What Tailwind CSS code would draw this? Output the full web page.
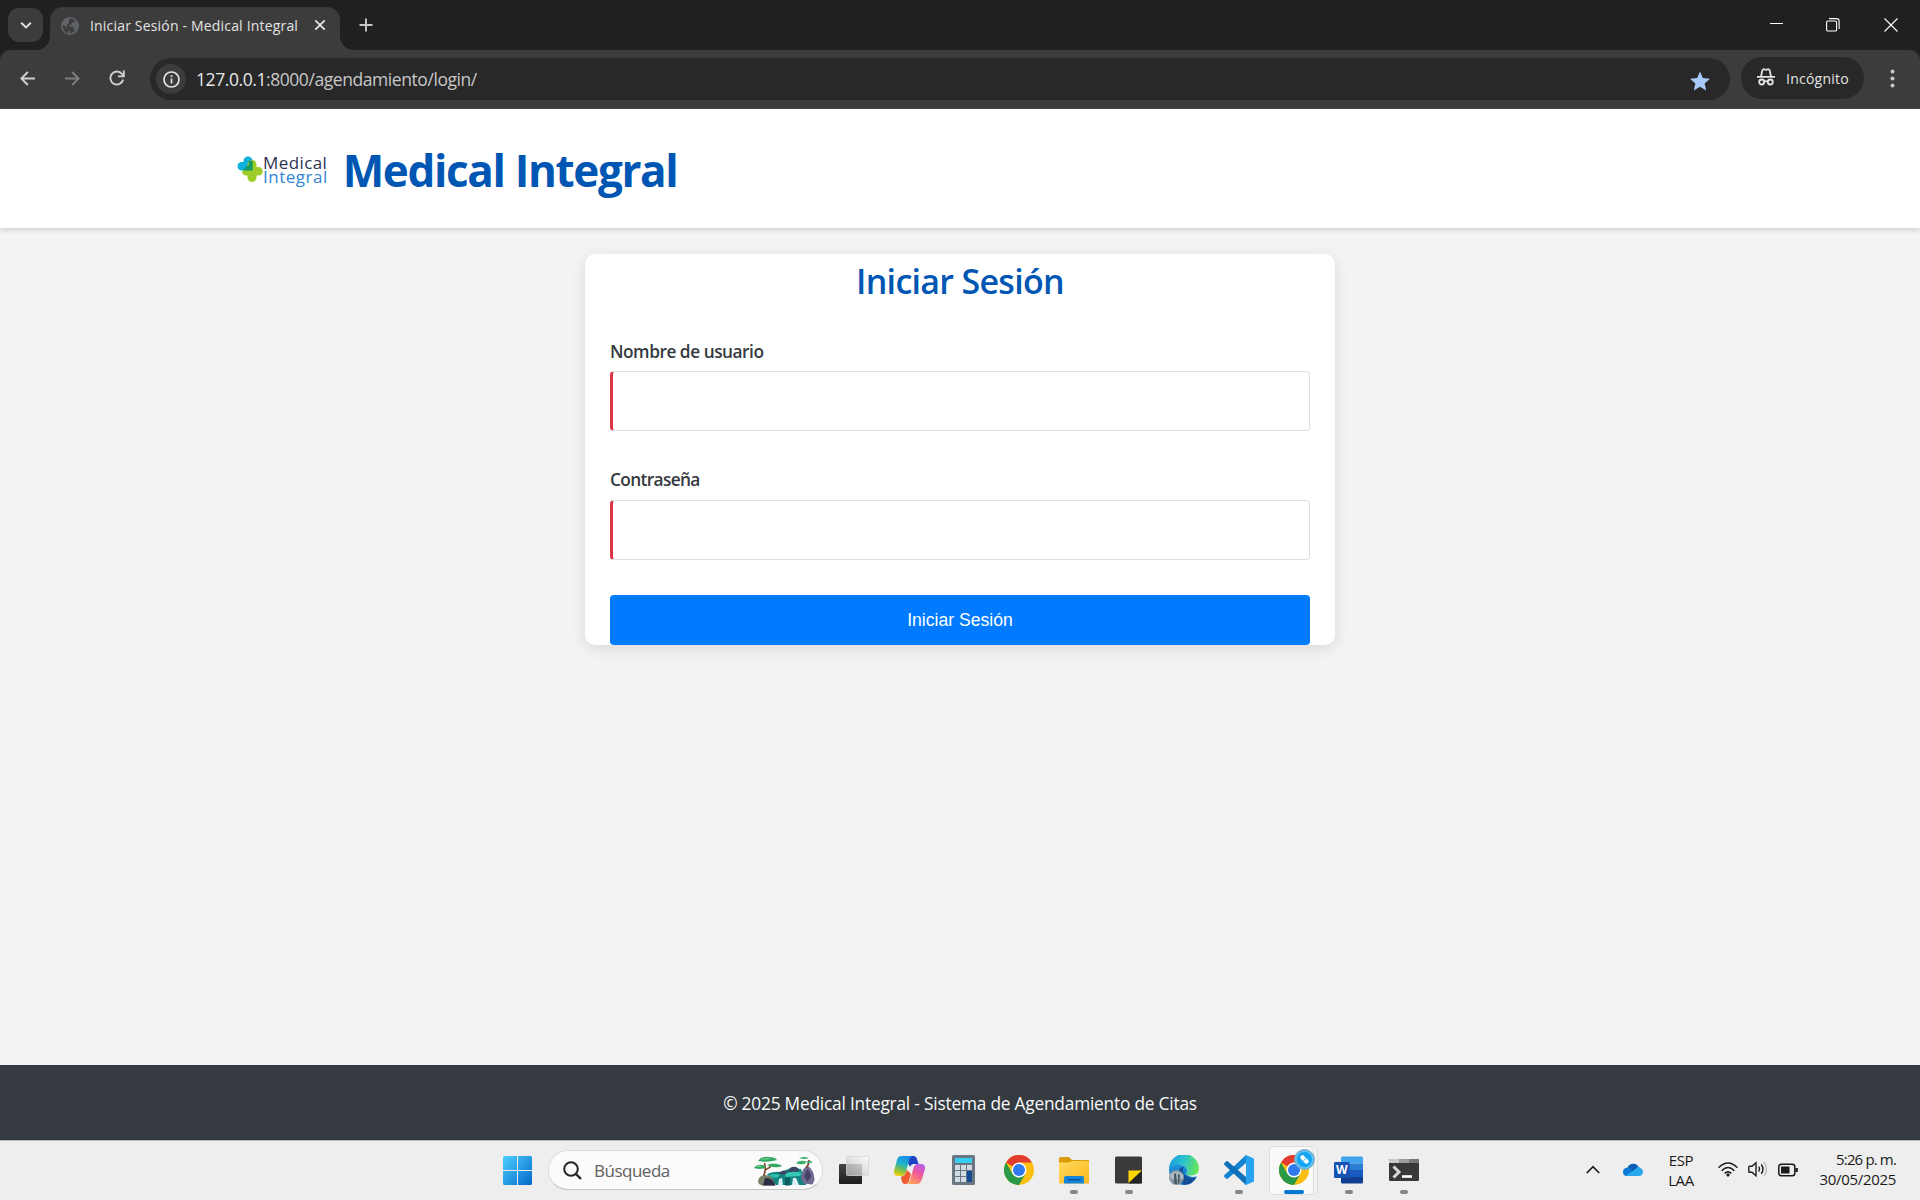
<!DOCTYPE html>
<html lang="es">
<head>
<meta charset="utf-8">
<title>Iniciar Sesión - Medical Integral</title>
<script src="https://cdn.jsdelivr.net/npm/@tailwindcss/browser@4"></script>
</head>
<body class="flex h-[1200px] w-[1920px] flex-col overflow-hidden bg-[#f3f3f3] font-['Open_Sans','Noto_Sans',sans-serif]">

<!-- Tab strip -->
<div class="flex h-[50px] shrink-0 items-start justify-between bg-[#1f2120]">
  <div class="flex">
    <button class="mt-2 ml-2 flex h-[34px] w-[35px] items-center justify-center rounded-[11px] bg-[#3c3c3c]">
      <svg class="size-[12px]" viewBox="0 0 12 12" fill="none" stroke="#e3e3e3" stroke-width="2"><path d="M1.200 3.800 6 8.400l4.800-4.600"/></svg>
    </button>
    <div class="relative mt-[7px] ml-[7px] flex h-[43px] w-[290px] items-center rounded-t-[13px] bg-[#3c3c3c] pr-[14px] pb-[7px] pl-[11px]">
      <svg class="absolute bottom-0 -left-[14px] size-[14px]" viewBox="0 0 14 14"><path d="M14 0v14H0A14 14 0 0 0 14 0z" fill="#3c3c3c"/></svg>
      <svg class="absolute -right-[14px] bottom-0 size-[14px]" viewBox="0 0 14 14"><path d="M0 0v14h14A14 14 0 0 1 0 0z" fill="#3c3c3c"/></svg>
      <svg class="mt-px size-[18px]" viewBox="0 0 18 18"><circle cx="9" cy="9" r="9" fill="#5f6368"/><path d="M2 7.500 5.500 11q1 1.500 2 1.500v3.800Q2.500 15 1.800 9.500zM8 2q3-.8 5.500 1v2.500H11V7.500H8.500V9.500H11.500q1 0 1 1.500v1.800h1.800Q11.500 16.500 9.500 16.200V14.500L7.500 12.500 5 10 6.500 7.500 8 6z" fill="#3c3c3c"/></svg>
      <span class="ml-[11px] flex-1 pt-[2px] text-[14px] leading-[20px] tracking-[0.180px] whitespace-nowrap text-[#e3e3e3]">Iniciar Sesión - Medical Integral</span>
      <svg class="size-[12px]" viewBox="0 0 12 12" stroke="#e3e3e3" stroke-width="1.800"><path d="M1.300 1.300l9.400 9.400M10.700 1.300l-9.400 9.400"/></svg>
    </div>
    <svg class="mt-[18px] ml-[19px] size-[14px]" viewBox="0 0 14 14" stroke="#c7c7c7" stroke-width="1.900"><path d="M7 .5v13M.5 7h13"/></svg>
  </div>
  <div class="flex items-start pr-[22px]">
    <svg class="mt-[18px] h-[13px] w-[13px]" viewBox="0 0 13 13" stroke="#fff" stroke-width="1"><path d="M0 5.500h13"/></svg>
    <svg class="mt-[18px] ml-[43px] size-[14px]" viewBox="0 0 14 14" fill="none" stroke="#fff" stroke-width="1.100"><rect x=".6" y="3" width="10" height="10" rx="1.300"/><path d="M3 .6h7.600a2.500 2.500 0 0 1 2.500 2.500v8"/></svg>
    <svg class="mt-[18px] ml-[44px] size-[14px]" viewBox="0 0 14 14" stroke="#fff" stroke-width="1.100"><path d="M.5.5l13 13M13.500.5l-13 13"/></svg>
  </div>
</div>

<!-- Toolbar -->
<div class="shrink-0 bg-[#1f2120]">
  <div class="flex h-[59px] items-start rounded-t-[11px] border-b border-[#4a4a4a] bg-[#3c3c3c]">
    <svg class="mt-[21px] ml-[20px] size-[15px]" viewBox="0 0 15 15" fill="none" stroke="#d0d0d0" stroke-width="1.900"><path d="M15 7.500H1.500M7.800 1 1.400 7.500l6.400 6.500"/></svg>
    <svg class="mt-[21px] ml-[30px] size-[15px]" viewBox="0 0 15 15" fill="none" stroke="#7d7d7d" stroke-width="1.900"><path d="M0 7.500h13.500M7.200 1l6.400 6.500L7.200 14"/></svg>
    <svg class="mt-[20px] ml-[29px] size-[16px]" viewBox="0 0 16 16" fill="none" stroke="#d0d0d0" stroke-width="1.900"><path d="M14.200 9.600A6.500 6.500 0 1 1 13 4l1.500 1.800M14.800.6v5.800H9"/></svg>
    <div class="mt-2 ml-[25px] flex h-[42px] w-[1580px] items-center rounded-full bg-[#282828] pr-[20px] pl-[6px]">
      <span class="flex size-[30px] items-center justify-center rounded-full bg-[#3c3c3c]">
        <svg class="size-[17px]" viewBox="0 0 17 17" fill="none" stroke="#e3e3e3" stroke-width="1.700"><circle cx="8.500" cy="8.500" r="7.500"/><path d="M8.500 7.500v5M8.500 4.300v1.800"/></svg>
      </span>
      <span class="ml-[10px] flex-1 text-[17.500px] leading-[24px] tracking-[-0.430px] text-[#c7c7c7]"><span class="text-[#e8e8e8]">127.0.0.1</span>:8000/agendamiento/login/</span>
      <svg class="mt-[3px] size-[20px]" viewBox="0 0 20 20" fill="#a8c7fa"><path d="M10 .5l2.900 6.500 7 .7-5.300 4.700 1.600 7L10 15.700l-6.200 3.700 1.600-7L.1 7.700l7-.7z"/></svg>
    </div>
    <div class="mt-[7px] ml-[11px] flex h-[42px] w-[123px] items-center rounded-full bg-[#282828] pl-[16px]">
      <svg class="-mt-[2px] h-[18px] w-[18px]" viewBox="0 0 18 18" fill="none" stroke="#e3e3e3" stroke-width="1.800"><path d="M0 8.800h18M4 8.500 5.300 2.600Q5.700.9 7.300 1.300L9 1.800l1.700-.5q1.600-.4 2 1.300L14 8.500"/><circle cx="4.700" cy="14" r="2.500"/><circle cx="13.300" cy="14" r="2.500"/><path d="M7 13.600q2-1 4 0"/></svg>
      <span class="ml-[11px] pt-[2px] text-[14px] leading-[20px] tracking-[0.250px] text-[#e3e3e3]">Incógnito</span>
    </div>
    <svg class="mt-[19px] ml-[26px] h-[19px] w-[5px]" viewBox="0 0 5 19" fill="#c7c7c7"><circle cx="2.500" cy="2.500" r="2"/><circle cx="2.500" cy="9.500" r="2"/><circle cx="2.500" cy="16.500" r="2"/></svg>
  </div>
</div>

<!-- Site header -->
<header class="flex h-[119px] shrink-0 items-center bg-white pl-[237px] shadow-[0_2px_5px_rgba(0,0,0,0.15)]">
  <div class="flex items-center">
    <svg class="h-[26px] w-[26px]" viewBox="0 0 26 26"><path d="M6.500 5a4.500 4.500 0 0 1 9 0v9.500H4.700a4.200 4.200 0 0 1 0-8.500h1.800z" fill="#0eb0dc"/><path d="M10.500 8.500a4.500 4.500 0 0 1 9 0V11h2a4.200 4.200 0 0 1 0 8.500h-2v2a4.500 4.500 0 0 1-9 0v-2h-2.500Q5 18.500 5 14.500h5.500z" fill="#9ccd29"/><path d="M11.500 5.500q4-2 4.200 0v9H6q3.500-5 6-5z" fill="#139a62"/></svg>
    <div class="flex flex-col pt-[2px] text-[17px] leading-[14px]">
      <span class="tracking-[0.400px] text-[#2b3350]">Medical</span>
      <span class="tracking-[0.500px] text-[#2f86d2]">Integral</span>
    </div>
  </div>
  <h1 class="ml-[15px] pt-[3px] text-[44px] leading-[60px] font-bold tracking-[-1.350px] whitespace-nowrap text-[#0056b3]">Medical Integral</h1>
</header>

<!-- Login form -->
<main class="flex flex-1 flex-col items-center pt-[26px]">
  <section class="flex w-[750px] flex-col rounded-[10px] bg-white px-[25px] shadow-[0_4px_15px_rgba(0,0,0,0.1)]">
    <h2 class="mt-[3px] h-[47px] text-center text-[34px] leading-[48px] font-semibold tracking-[-0.700px] text-[#0056b3]">Iniciar Sesión</h2>
    <label class="mt-[35px] text-[17.300px] leading-[26px] font-semibold tracking-[-0.480px] text-[#343a40]">Nombre de usuario</label>
    <input type="text" class="mt-[6px] h-[60px] rounded-[4px] border border-l-[3px] border-[#dee0e6] border-l-[#dc3545] bg-white">
    <label class="mt-[36px] text-[17.300px] leading-[26px] font-semibold tracking-[-0.650px] text-[#343a40]">Contraseña</label>
    <input type="password" class="mt-[7px] h-[60px] rounded-[4px] border border-l-[3px] border-[#dee0e6] border-l-[#dc3545] bg-white">
    <button class="mt-[35px] h-[50px] rounded-[4px] bg-[#007bff] text-center font-['Liberation_Sans',sans-serif] text-[17.600px] text-white">Iniciar Sesión</button>
  </section>
</main>

<footer class="flex h-[75px] shrink-0 items-center justify-center bg-[#343a40] pt-[3px] text-[17.300px] leading-[26px] tracking-[-0.200px] text-[#f8f9fa]">© 2025 Medical Integral - Sistema de Agendamiento de Citas</footer>

<!-- Taskbar -->
<div class="flex h-[60px] shrink-0 items-start border-t border-[#b9b9bb] bg-[#eeeeee] text-[#1b1b1b]">
  <svg class="mt-[15px] ml-[503px] size-[29px]" viewBox="0 0 29 29"><defs><linearGradient id="win" x1="0" y1="0" x2="1" y2="1" gradientUnits="objectBoundingBox"><stop stop-color="#4fd0ff"/><stop offset="1" stop-color="#0067c8"/></linearGradient></defs><path d="M1.500 0H14v14H0V1.500A1.500 1.500 0 0 1 1.500 0zM15 0h12.500A1.500 1.500 0 0 1 29 1.500V14H15zM0 15h14v14H1.500A1.500 1.500 0 0 1 0 27.500zM15 15h14v12.500a1.500 1.500 0 0 1-1.500 1.500H15z" fill="url(#win)"/></svg>

  <div class="mt-[9px] ml-[16px] flex h-[40px] w-[275px] items-center rounded-full border border-[#dcdcdc] border-b-[#c4c4c4] bg-[#fbfbfb] pl-[14px]">
    <svg class="size-[19px]" viewBox="0 0 19 19" fill="none" stroke="#262626" stroke-width="2"><circle cx="8" cy="8" r="6.800"/><path d="M12.800 12.800l5.200 5.200" stroke-width="2.400"/></svg>
    <span class="ml-[12px] pt-px text-[17px] leading-[24px] tracking-[-0.500px] text-[#606060]">Búsqueda</span>
    <svg class="mt-[2px] mr-[7px] ml-auto h-[31px] w-[61px]" viewBox="0 0 61 31">
      <path d="M13 18q8-3 14-2l10-4 10 1 5 16H22z" fill="#12837f"/>
      <path d="M24 18q4-5 8-3l3 4zM36 12q5-3 9 1l-2 4-9-1z" fill="#3e4468"/>
      <path d="M31 18q7-4 17-1l-2 3-14 1z" fill="#34c9b4"/>
      <path d="M15 19q6-2 11 0l-3 3-6-1z" fill="#2fbfae"/>
      <path d="M25 23l3-1 1 7.500h-5zM39 22h3l3 7h-7z" fill="#dceef8"/>
      <path d="M31 22l5-1v8.500h-5z" fill="#0b5f63"/>
      <path d="M4 25q1-6 8-6 8 1 9.500 10.500H8Q4 28.500 4 25z" fill="#79836b"/><path d="M11 22q8-1 10.500 7.500H9z" fill="#2c2f44"/>
      <path d="M47 22q1-11 7-12 6 4 6.500 14l-2 4.500-9-1z" fill="#6f6b95"/><path d="M53 13q4 3 4 8l-4 5-3-6z" fill="#454366"/>
      <path d="M9.500 20q3-6 1-13M11 14q5-2 7-5M52 12q3-3 3-8" fill="none" stroke="#7d4a32" stroke-width="1.700"/>
      <path d="M0 12q3-4 9-3 3 1 2 3-5 2-11 0zM4 5q3-5 11-4 6 0 8 3-9 3-19 1zM13 9q6-3 14 0 2 1-2 2-8 1-12-2z" fill="#35a866"/>
      <path d="M42 7q3-3 9-2 2 2-1 3-5 1-8-1zM45 2q5-2 10 0-4 2-10 0zM51 6q5-2 8 0-3 2-8 0z" fill="#3fae6b"/>
      <path d="M6 3.500q5-2 11-1l-4 1zM2 11q3-2 6-1l-2 1z" fill="#7ad789"/>
    </svg>
  </div>

  <svg class="mt-[15px] ml-[16px] size-[30px]" viewBox="0 0 30 30"><defs><linearGradient id="tv" x1="0" y1="0" x2="0" y2="1"><stop stop-color="#454545"/><stop offset="1" stop-color="#1c1c1c"/></linearGradient><linearGradient id="tv2" x1="1" y1="0" x2="0" y2="1"><stop stop-color="#fff"/><stop offset="1" stop-color="#b9b9b9"/></linearGradient></defs><rect y="8" width="23" height="20" rx="1" fill="url(#tv)"/><rect x="7.500" y=".5" width="22" height="19" rx="1" fill="url(#tv2)" fill-opacity=".8" stroke="#d5d5d5" stroke-width=".8"/></svg>

  <svg class="mt-[15px] ml-[25px] h-[28px] w-[31px]" viewBox="0 0 31 28"><defs><linearGradient id="cp1" x1=".6" y1="0" x2=".3" y2="1"><stop stop-color="#1a8fe8"/><stop offset=".4" stop-color="#1db3c9"/><stop offset=".7" stop-color="#7cc04a"/><stop offset="1" stop-color="#f2cf12"/></linearGradient><linearGradient id="cp2" x1=".8" y1="0" x2=".3" y2="1"><stop stop-color="#b45cf0"/><stop offset=".45" stop-color="#f0569a"/><stop offset="1" stop-color="#ffa25a"/></linearGradient></defs><path d="M15 0h4.500q2.500 0 3.500 3l1.500 5H20q-3 0-4 3l-2-4z" fill="#1c43c4"/><path d="M7.500 0H18q-2 1-3 4l-3 12.500q-1 3.500-4.500 3.500H4q-4.500 0-4-5L3 4q1-4 4.500-4z" fill="url(#cp1)"/><path d="M7 20.500q4 0 5-4l1-2.500 4 4-2.500 8q-1 2-3.500 2-2.500 0-3.500-4z" fill="#f0592e"/><path d="M23 28H13q2-1 3-4l3.500-12q1-4 4.500-4h3q4.500 0 4 5l-3 10q-1.500 5-5 5z" fill="url(#cp2)"/></svg>

  <svg class="mt-[14px] ml-[27px] h-[30px] w-[23px]" viewBox="0 0 23 30"><rect width="23" height="30" rx="1.500" fill="#6a7682"/><rect x="3" y="3" width="17" height="5" fill="#35cdf2"/><g fill="#d3dbe2"><rect x="3" y="10" width="5" height="5"/><rect x="9" y="10" width="5" height="5"/><rect x="15" y="10" width="5" height="5"/><rect x="3" y="16" width="5" height="5"/><rect x="9" y="16" width="5" height="5"/><rect x="3" y="22" width="5" height="5"/><rect x="9" y="22" width="5" height="5"/></g><rect x="15" y="16" width="5" height="11" fill="#124b92"/></svg>

  <svg class="mt-[14px] ml-[29px] size-[30px]" viewBox="0 0 30 30"><g id="chrome"><circle cx="15" cy="15" r="15" fill="#fbbf12"/><path d="M15 15 2 7.500A15 15 0 0 1 28 7.500H15z" fill="#e33b2e"/><path d="M2 7.500A15 15 0 0 0 15 30l6.500-11.300L15 15l-6.500 3.700z" fill="#2a9a48"/><circle cx="15" cy="15" r="7.500" fill="#fff"/><circle cx="15" cy="15" r="6" fill="#2f7bee"/></g></svg>

  <div class="mt-[14px] ml-[25px] flex flex-col items-center">
    <svg class="size-[30px]" viewBox="0 0 30 30"><defs><linearGradient id="fo" x1="0" y1="0" x2="1" y2="1"><stop stop-color="#ffd95e"/><stop offset="1" stop-color="#fcb81c"/></linearGradient></defs><path d="M0 3.500Q0 2 1.500 2H10l3 3h17v9H0z" fill="#dc9c08"/><path d="M0 7.500h10L13 6h17v21.500q0 1-1 1H1q-1 0-1-1z" fill="url(#fo)"/><path d="M5 28.500V23q0-2 2-2h16q2 0 2 2v5.500z" fill="#1585d8"/><path d="M8.500 24.700h13" stroke="#0a4f96" stroke-width="1.300"/></svg>
    <span class="mt-[5px] h-[4px] w-[8px] rounded-full bg-[#868686]"></span>
  </div>

  <div class="mt-[14px] ml-[26px] flex flex-col items-center">
    <svg class="h-[30px] w-[27px]" viewBox="0 0 27 30"><rect y="1.500" width="27" height="27" rx="1.500" fill="#3a3a3a"/><path d="M13.500 15.500H27L13.500 28z" fill="#ffd800"/><path d="M13.500 28.500 27 15.500v11.500q0 1.500-1.500 1.500z" fill="#262626"/></svg>
    <span class="mt-[5px] h-[4px] w-[8px] rounded-full bg-[#868686]"></span>
  </div>

  <svg class="mt-[14px] ml-[27px] size-[30px]" viewBox="0 0 30 30"><defs><linearGradient id="ed" x1="0" y1=".3" x2="1" y2=".5"><stop stop-color="#1a9de0"/><stop offset=".5" stop-color="#2cc4c9"/><stop offset="1" stop-color="#6ae556"/></linearGradient><linearGradient id="ed2" x1="0" y1="0" x2="0" y2="1"><stop stop-color="#1f9ae2"/><stop offset="1" stop-color="#1263b8"/></linearGradient></defs><path d="M0 14Q2 8 10 9q7 1 8.500 6.500 0 2-1.500 3 3 4.500 11 3Q24 30 15 30 0 29 0 14z" fill="url(#ed2)"/><path d="M10 15q1-3 5-3-2 2-1 5 3 7 11 6 2 0 2.500-1Q23 30 15 29.500 9 24 10 15z" fill="#124e95"/><path d="M0 14A15 15 0 0 1 30 14q-.5 6-7.500 6.500-5.500 0-5.500-2 2-1.500 1.500-3.500Q16 9 9 9 3 9.500 0 14z" fill="url(#ed)"/><circle cx="7.500" cy="22.500" r="7.500" fill="#8594a0"/><path d="M.5 20q6.500-7 14 0l-1 4H2z" fill="#a9bac6"/><path d="M5 19l2-1 1 11H5.500zM9 18.500l2 2-1 8H9z" fill="#46545e"/></svg>

  <div class="mt-[14px] ml-[25px] flex flex-col items-center">
    <svg class="size-[30px]" viewBox="0 0 30 30"><path d="M22 0v8L4 23.500q-1 .8-2 0L.5 22q-1-1 0-2z" fill="#1583cf"/><path d="M22 30v-8L4 6.500q-1-.8-2 0L.5 8q-1 1 0 2z" fill="#0f6fb8"/><path d="M22 0l7 3q1 .5 1 1.500v21q0 1-1 1.500l-7 3q-1 .3-1.500-.5L22 28z" fill="#28a3f0"/></svg>
    <span class="mt-[5px] h-[4px] w-[8px] rounded-full bg-[#868686]"></span>
  </div>

  <div class="relative mt-[5px] ml-[15px] h-[49px] w-[49px] rounded-[5px] border border-[#dedede] bg-[#f3f3f3]">
    <div class="flex h-[47px] w-[44px] flex-col items-center rounded-[5px] border-r border-[#dcdcdc] bg-[#fafafa] pt-[8px] pl-[4px]">
      <svg class="size-[30px] shrink-0" viewBox="0 0 30 30"><use href="#chrome"/></svg>
      <span class="mt-[5px] h-[4px] w-[20px] shrink-0 rounded-full bg-[#0078d4]"></span>
    </div>
    <svg class="absolute top-[2px] left-[24px] size-[21px]" viewBox="0 0 21 21"><circle cx="10.500" cy="10.500" r="10" fill="#5fc0ee" stroke="#7fa9bd"/><circle cx="10.500" cy="10.500" r="7.500" fill="#12a5f2"/><path d="M8.500 8.500l4 4" stroke="#fff" stroke-width="4.500" stroke-linecap="round"/><path d="M9.500 12l2.500-3" stroke="#12a5f2" stroke-width=".8"/></svg>
  </div>

  <div class="mt-[14px] ml-[16px] flex flex-col items-center">
    <svg class="size-[30px]" viewBox="0 0 30 30"><path d="M7 3q0-1.500 1.500-1.500h19q1.500 0 1.500 1.500v5.500H7z" fill="#41a5ee"/><path d="M7 8.500h22V15H7z" fill="#2b7cd3"/><path d="M7 15h22v7H7z" fill="#185abd"/><path d="M7 22h22v5q0 1.500-1.500 1.500h-19Q7 28.500 7 27z" fill="#103f91"/><rect y="7" width="15.500" height="16" rx="1.300" fill="#1652b4"/><text x="7.700" y="19" text-anchor="middle" font-family="Open Sans" font-size="12" font-weight="700" fill="#fff">W</text></svg>
    <span class="mt-[5px] h-[4px] w-[8px] rounded-full bg-[#868686]"></span>
  </div>

  <div class="mt-[14px] ml-[25px] flex flex-col items-center">
    <svg class="size-[30px]" viewBox="0 0 30 30"><rect y="4" width="30" height="22" rx="1.300" fill="#383838"/><path d="M0 8V5.300Q0 4 1.300 4H10v4z" fill="#c9c9c9"/><path d="M10 4h10v4H10z" fill="#9b9b9b"/><path d="M20 4h8.700Q30 4 30 5.300V8H20z" fill="#767676"/><path d="M4.500 11.500 10 17l-5.500 5.500" fill="none" stroke="#d6d6d6" stroke-width="3"/><path d="M13 21.500h10" stroke="#fff" stroke-width="2.600"/></svg>
    <span class="mt-[5px] h-[4px] w-[8px] rounded-full bg-[#868686]"></span>
  </div>

  <div class="ml-auto flex items-start pr-[24px]">
    <svg class="mt-[24px] h-[9px] w-[14px]" viewBox="0 0 14 9" fill="none" stroke="#1b1b1b" stroke-width="1.700"><path d="M.8 8 7 1.600 13.200 8"/></svg>
    <svg class="mt-[22px] ml-[23px] h-[13px] w-[20px]" viewBox="0 0 20 13"><path d="M4.500 5A6 6 0 0 1 15.500 4l-5 5z" fill="#0a5cb5"/><path d="M4 13Q0 13 0 9t4.500-4.500q2 0 4 2l4 6.500z" fill="#0f78d4"/><path d="M3 12.500 13 5.500Q16 3 17.500 5q2.500 1 2.500 4t-3.500 4H4z" fill="#28a8ea"/></svg>
    <div class="mt-[9px] ml-[23px] w-[30px] text-center text-[15px] leading-[20px] tracking-[-0.400px]"><p>ESP</p><p>LAA</p></div>
    <svg class="mt-[21px] ml-[22px] h-[15px] w-[20px]" viewBox="0 0 20 15" fill="none" stroke="#1b1b1b" stroke-width="1.500"><path d="M.6 5.800q9.400-9.600 18.800 0M3.700 8.800q6.300-6.400 12.600 0M6.600 11.500q3.400-3.200 6.800 0"/><circle cx="10" cy="13" r="1.300" fill="#1b1b1b" stroke-width=".6"/></svg>
    <svg class="mt-[20px] ml-[10px] h-[17px] w-[21px]" viewBox="0 0 21 17" fill="none" stroke="#1b1b1b" stroke-width="1.400"><path d="M.8 6v4.500q0 .8.800.8H4l4 3.500V1.700L4 5.200H1.600Q.8 5.200.8 6z"/><path d="M10.800 5.700q1.600 2.500 0 5M13.300 3.500q3.300 4.700 0 9.400"/><path d="M16 1q5 7.200 0 14.400" stroke="#bdbdbd"/></svg>
    <svg class="mt-[22px] ml-[9px] h-[14px] w-[20px]" viewBox="0 0 20 14" fill="none" stroke="#1b1b1b" stroke-width="1.500"><rect x=".8" y="1.300" width="16" height="11.400" rx="2.500"/><rect x="3" y="3.500" width="8.500" height="7" fill="#1b1b1b" stroke="none"/><path d="M18.600 5v4" stroke-width="2.400"/></svg>
    <div class="mt-[8px] ml-[20px] w-[78px] text-right text-[15px] leading-[20px] whitespace-nowrap"><p class="tracking-[-0.850px]">5:26 p. m.</p><p class="tracking-[-0.300px]">30/05/2025</p></div>
  </div>
</div>
</body>
</html>
